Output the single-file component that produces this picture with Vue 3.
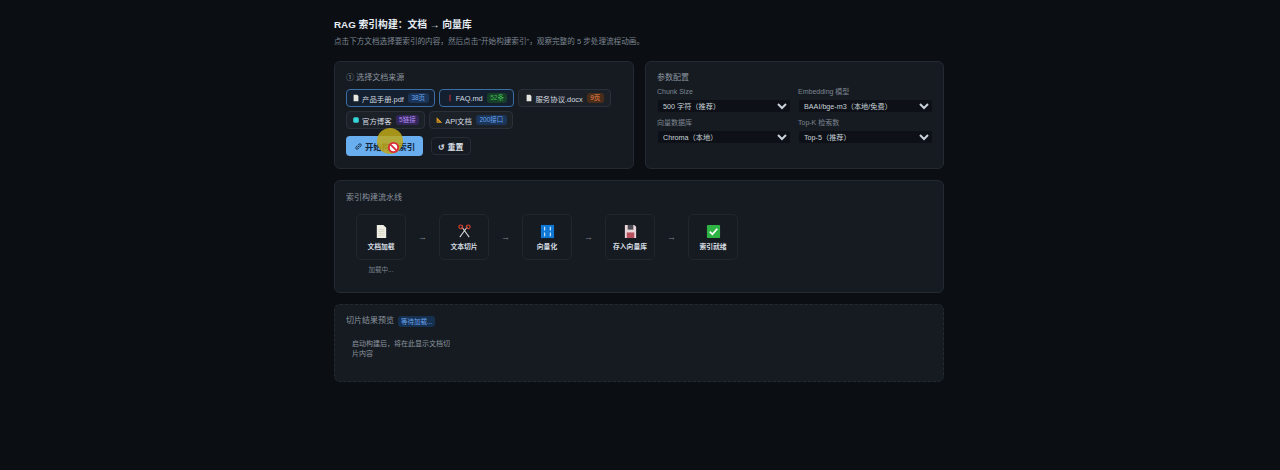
<script setup>
const docsRow1 = [
  { name: '产品手册.pdf', tag: '38页', tagClass: 'tag-blue', icon: 'doc', active: true },
  { name: 'FAQ.md', tag: '52条', tagClass: 'tag-green', icon: 'pin', active: true },
  { name: '服务协议.docx', tag: '9页', tagClass: 'tag-orange', icon: 'doc', active: false },
]
const docsRow2 = [
  { name: '官方博客', tag: '5链接', tagClass: 'tag-purple', icon: 'globe', active: false },
  { name: 'API文档', tag: '200接口', tagClass: 'tag-blue', icon: 'ruler', active: false },
]
const steps = [
  { label: '文档加载', icon: 'page', note: '加载中...' },
  { label: '文本切片', icon: 'scissors', note: '' },
  { label: '向量化', icon: 'numbers', note: '' },
  { label: '存入向量库', icon: 'disk', note: '' },
  { label: '索引就绪', icon: 'check', note: '' },
]
const selects = [
  { label: 'Chunk Size', options: ['500 字符（推荐）', '300 字符', '800 字符'] },
  { label: 'Embedding 模型', options: ['BAAI/bge-m3（本地/免费）', 'text-embedding-3-small'] },
  { label: '向量数据库', options: ['Chroma（本地）', 'Milvus', 'Qdrant'] },
  { label: 'Top-K 检索数', options: ['Top-5（推荐）', 'Top-3', 'Top-10'] },
]
</script>

<template>
  <div class="page">
    <h1 class="title">RAG 索引构建：文档 → 向量库</h1>
    <p class="subtitle">点击下方文档选择要索引的内容，然后点击"开始构建索引"，观察完整的 5 步处理流程动画。</p>

    <div class="top-row">
      <section class="card source-card">
        <h2 class="card-title">① 选择文档来源</h2>
        <div class="chips first-row">
          <button v-for="d in docsRow1" :key="d.name" :class="['chip', { active: d.active }]">
            <svg class="chip-icon" viewBox="0 0 10 10">
              <template v-if="d.icon === 'doc'">
                <path d="M2 1h4.5L8 2.5V9H2z" fill="#e6e6e0" />
              </template>
              <template v-else>
                <path d="M5 1v8" stroke="#d8343c" stroke-width="1.2" />
              </template>
            </svg>
            {{ d.name }}
            <span :class="['tag', d.tagClass]">{{ d.tag }}</span>
          </button>
        </div>
        <div class="chips">
          <button v-for="d in docsRow2" :key="d.name" class="chip">
            <svg class="chip-icon" viewBox="0 0 10 10">
              <template v-if="d.icon === 'globe'">
                <rect x="1.5" y="1.5" width="7" height="7" rx="2" fill="#35d5d8" />
              </template>
              <template v-else>
                <path d="M2 1.5v7h7z" fill="#e8a020" />
                <path d="M3.4 5.2v1.9h1.9z" fill="#1a1f26" />
              </template>
            </svg>
            {{ d.name }}
            <span :class="['tag', d.tagClass]">{{ d.tag }}</span>
          </button>
        </div>
        <div class="actions">
          <button class="btn-start">
            <svg class="btn-icon" viewBox="0 0 12 12">
              <path d="M5 7l2-2M4.2 5.4L2.8 6.8a1.7 1.7 0 0 0 2.4 2.4l1.4-1.4M5.4 4.2l1.4-1.4a1.7 1.7 0 0 1 2.4 2.4L7.8 6.6" fill="none" stroke="#12243a" stroke-width="1.2" stroke-linecap="round" />
            </svg>
            开始构建索引
            <span class="cursor-mark">
              <svg viewBox="0 0 14 14" class="no-icon">
                <circle cx="7" cy="7" r="5" fill="#fff" stroke="#d92b3a" stroke-width="2" />
                <path d="M3.6 3.6l6.8 6.8" stroke="#d92b3a" stroke-width="2" />
              </svg>
            </span>
          </button>
          <button class="btn-reset">↺ 重置</button>
        </div>
      </section>

      <section class="card config-card">
        <h2 class="card-title config-title">参数配置</h2>
        <div class="config-grid">
          <label v-for="s in selects" :key="s.label" class="field">
            <span class="field-label">{{ s.label }}</span>
            <select class="field-select">
              <option v-for="o in s.options" :key="o">{{ o }}</option>
            </select>
          </label>
        </div>
      </section>
    </div>

    <section class="card pipeline-card">
      <h2 class="card-title">索引构建流水线</h2>
      <div class="pipeline">
        <template v-for="(s, i) in steps" :key="s.label">
          <div class="step-wrap">
            <div class="step">
              <svg class="step-icon" viewBox="0 0 16 16">
                <template v-if="s.icon === 'page'">
                  <path d="M3 1h7l3 3v11H3z" fill="#eeeee2" />
                  <path d="M5 6h6M5 8h6M5 10h6M5 12h6" stroke="#c9c9b8" stroke-width=".6" />
                </template>
                <template v-else-if="s.icon === 'scissors'">
                  <path d="M3 14L11 3M13 14L5 3" stroke="#d7d7d7" stroke-width="1.1" />
                  <circle cx="4" cy="3" r="2" fill="none" stroke="#d8402c" stroke-width="1.2" />
                  <circle cx="12" cy="3" r="2" fill="none" stroke="#d8402c" stroke-width="1.2" />
                </template>
                <template v-else-if="s.icon === 'numbers'">
                  <rect x="1" y="1" width="14" height="14" fill="#0f78d4" />
                  <path d="M5 3v4M11 3v4M5 9v4M11 9v4" stroke="#e8f2fb" stroke-width="1.1" />
                </template>
                <template v-else-if="s.icon === 'disk'">
                  <path d="M2 1h10l2 2v12H2z" fill="#e9d5da" />
                  <rect x="5" y="1" width="6" height="5" fill="#4a4a52" />
                  <rect x="4" y="9" width="8" height="6" fill="#b9505e" />
                </template>
                <template v-else>
                  <rect x="1" y="1" width="14" height="14" rx="1" fill="#2fb344" />
                  <path d="M4 8.2l2.8 2.8L12 5" fill="none" stroke="#fff" stroke-width="1.8" />
                </template>
              </svg>
              <span class="step-label">{{ s.label }}</span>
            </div>
            <span class="step-note">{{ s.note }}</span>
          </div>
          <span v-if="i < steps.length - 1" class="arrow">→</span>
        </template>
      </div>
    </section>

    <section class="card result-card">
      <div class="result-head">
        <h2 class="card-title no-margin">切片结果预览</h2>
        <span class="status">等待加载...</span>
      </div>
      <p class="result-empty">启动构建后，将在此显示文档切片内容</p>
    </section>
  </div>
</template>

<style>
html,
body {
  margin: 0;
  background: #0b0f14;
}
</style>

<style scoped>
.page {
  width: 610px;
  height: 470px;
  box-sizing: border-box;
  margin-left: 334px;
  padding-top: 18px;
  font-family: "Liberation Sans", "Noto Sans CJK SC", sans-serif;
  color: #c9d1d9;
  overflow: hidden;
}

.title {
  margin: 0 0 5px;
  font-size: 9.8px;
  line-height: 13px;
  font-weight: 700;
  color: #e6edf3;
}

.subtitle {
  margin: 0 0 13px;
  font-size: 7.6px;
  line-height: 12px;
  color: #7d8590;
  white-space: nowrap;
}

.top-row {
  display: grid;
  grid-template-columns: 300px 299px;
  gap: 11px;
  margin-bottom: 11px;
}

.card {
  box-sizing: border-box;
  background: #161b22;
  border: 1px solid #242a32;
  border-radius: 6px;
  padding: 10px 11px;
}

.card-title {
  margin: 0 0 5px;
  font-size: 8px;
  line-height: 12px;
  font-weight: 400;
  color: #8b949e;
}

.config-title {
  margin-bottom: 3px;
}

.no-margin {
  margin: 0;
}

.source-card,
.config-card {
  height: 108px;
}

.chips {
  display: flex;
  gap: 4px;
  margin-bottom: 4px;
}

.chip {
  display: flex;
  align-items: center;
  gap: 2px;
  height: 18px;
  box-sizing: border-box;
  padding: 0 5px;
  background: #1c2128;
  border: 1px solid #2a3038;
  border-radius: 4px;
  color: #d5dbe1;
  font: inherit;
  font-size: 7.4px;
  white-space: nowrap;
}

.first-row .chip:nth-child(n + 2) {
  padding: 0 6px;
}

.chip.active {
  background: #14202f;
  border-color: #3b6ea5;
}

.chip-icon {
  width: 8px;
  height: 8px;
  flex: none;
}

.tag {
  margin-left: 2px;
  padding: 1px 3.5px;
  border-radius: 3px;
  font-size: 6.5px;
  line-height: 8px;
}

.tag-blue {
  background: #1b3558;
  color: #6aa5f0;
}

.tag-green {
  background: #17402a;
  color: #3fb950;
}

.tag-orange {
  background: #4a2c1a;
  color: #ee8a4a;
}

.tag-purple {
  background: #33275a;
  color: #b48cf2;
}

.actions {
  display: flex;
  align-items: center;
  gap: 8px;
  margin-top: 7px;
}

.btn-start {
  position: relative;
  display: flex;
  align-items: center;
  justify-content: center;
  gap: 2px;
  width: 77px;
  height: 20px;
  padding: 0;
  background: #69aeef;
  border: none;
  border-radius: 4px;
  color: #12243a;
  font: inherit;
  font-size: 8.4px;
  font-weight: 700;
}

.btn-icon {
  width: 9px;
  height: 9px;
}

/* cursor highlight from the recording */
.cursor-mark {
  position: absolute;
  left: 31px;
  top: -8px;
  width: 26px;
  height: 26px;
  border-radius: 50%;
  background: rgba(190, 168, 25, 0.85);
  display: flex;
  align-items: center;
  justify-content: center;
}

.no-icon {
  width: 13px;
  height: 13px;
  margin-top: 12px;
  margin-left: 6px;
}

.btn-reset {
  width: 40px;
  height: 18px;
  padding: 0;
  background: #161b22;
  border: 1px solid #262c34;
  border-radius: 4px;
  color: #d5dbe1;
  font: inherit;
  font-size: 8px;
  font-weight: 700;
}

.config-grid {
  display: grid;
  grid-template-columns: 134px 135px;
  column-gap: 7px;
  row-gap: 5px;
}

.field {
  display: flex;
  flex-direction: column;
  gap: 2px;
}

.field-label {
  font-size: 7px;
  line-height: 10px;
  color: #7d8590;
  white-space: nowrap;
}

.field-select {
  height: 14px;
  width: 100%;
  padding: 0 1px;
  background: #0d1117;
  border: 1px solid #161b22;
  border-radius: 3px;
  color: #c9d1d9;
  font: inherit;
  font-size: 7.2px;
}

.pipeline-card {
  height: 113px;
  margin-bottom: 11px;
  padding-top: 11px;
}

.pipeline {
  display: flex;
  align-items: flex-start;
  gap: 0;
  padding: 5px 10px 0;
}

.step-wrap {
  display: flex;
  flex-direction: column;
  align-items: center;
  gap: 5px;
  width: 50px;
}

.step {
  box-sizing: border-box;
  width: 50px;
  height: 46px;
  display: flex;
  flex-direction: column;
  align-items: center;
  padding-top: 9px;
  background: #161b22;
  border: 1px solid #21262d;
  border-radius: 5px;
}

.step-icon {
  width: 15px;
  height: 15px;
}

.step-label {
  margin-top: 3px;
  font-size: 6.8px;
  line-height: 10px;
  font-weight: 700;
  color: #d5dbe1;
  white-space: nowrap;
}

.step-note {
  font-size: 6.5px;
  line-height: 10px;
  color: #7d8590;
}

.arrow {
  width: 33px;
  height: 46px;
  line-height: 46px;
  text-align: center;
  font-size: 9px;
  color: #7d8590;
}

.result-card {
  height: 78px;
  border-style: dashed;
}

.result-head {
  display: flex;
  align-items: center;
  gap: 4px;
}

.status {
  padding: 1px 3px;
  border-radius: 3px;
  background: #16304f;
  color: #6aa5f0;
  font-size: 6.5px;
  line-height: 9px;
}

.result-empty {
  width: 104px;
  margin: 12px 0 0 6px;
  font-size: 7px;
  line-height: 10px;
  color: #8b949e;
}
</style>
